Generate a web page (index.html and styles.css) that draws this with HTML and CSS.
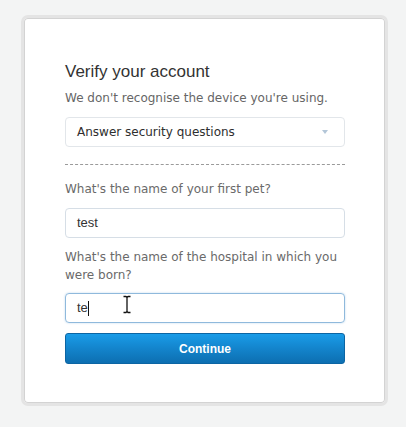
FILE: index.html
```html
<!DOCTYPE html>
<html>
<head>
<meta charset="utf-8">
<link rel="stylesheet" href="styles.css">
</head>
<body>
<div class="card">
  <h1 class="title">Verify your account</h1>
  <p class="subtitle">We don't recognise the device you're using.</p>
  <div class="select">
    <span class="select-text">Answer security questions</span>
    <span class="arrow"></span>
  </div>
  <hr class="divider">
  <label class="label">What's the name of your first pet?</label>
  <div class="field"><span class="field-text">test</span></div>
  <label class="label">What's the name of the hospital in which you were born?</label>
  <div class="field focused">
    <span class="field-text">te</span><span class="caret"></span>
    <svg class="ibeam" width="10" height="19" viewBox="0 0 10 19">
      <path d="M1.5 1.5 H4 L5 2.5 L6 1.5 H8.5 M5 2.5 V16.5 M1.5 17.5 H4 L5 16.5 L6 17.5 H8.5" fill="none" stroke="#fff" stroke-width="3" stroke-linecap="round" stroke-linejoin="round"/>
      <path d="M1.5 1.5 H4 L5 2.5 L6 1.5 H8.5 M5 2.5 V16.5 M1.5 17.5 H4 L5 16.5 L6 17.5 H8.5" fill="none" stroke="#111" stroke-width="1.3" stroke-linejoin="round"/>
    </svg>
  </div>
  <button class="button">Continue</button>
</div>
</body>
</html>
```
FILE: styles.css
```css
html, body {
  margin: 0;
  padding: 0;
}
body {
  background: #f3f4f4;
  width: 406px;
  height: 427px;
  overflow: hidden;
  padding-top: 15px;
  box-sizing: border-box;
}
.card {
  box-sizing: border-box;
  margin-left: 21px;
  width: 367px;
  height: 391px;
  background: #fff;
  border: 3px solid #e4e4e4;
  box-shadow: inset 0 0 0 1px #d3d3d3;
  border-radius: 7px;
  padding: 44px 40px 0 41px;
  display: flex;
  flex-direction: column;
}
.title {
  margin: 0;
  font-family: "Liberation Sans", Arial, sans-serif;
  font-weight: normal;
  font-size: 17px;
  line-height: 20px;
  color: #333;
}
.subtitle {
  margin: 7px 0 0;
  font-family: "DejaVu Sans", sans-serif;
  font-size: 12px;
  line-height: 18px;
  color: #666;
}
.select {
  margin-top: 10px;
  height: 30px;
  box-sizing: border-box;
  border: 1px solid #e2e6ea;
  border-radius: 4px;
  display: flex;
  align-items: center;
  justify-content: space-between;
  padding: 0 16px 0 11px;
}
.select-text {
  font-family: "DejaVu Sans", sans-serif;
  font-size: 12px;
  color: #2e2e2e;
}
.arrow {
  width: 0;
  height: 0;
  border-left: 3.5px solid transparent;
  border-right: 3.5px solid transparent;
  border-top: 4px solid #b3c6d8;
  margin-top: -1px;
}
.divider {
  margin: 17px 0 0;
  border: 0;
  border-top: 1px dashed #9a9a9a;
  height: 0;
}
.label {
  display: block;
  margin-top: 15px;
  font-family: "DejaVu Sans", sans-serif;
  font-size: 12px;
  line-height: 18px;
  color: #6a6a6a;
}
.field + .label {
  margin-top: 10px;
}
.field {
  position: relative;
  margin-top: 10px;
  height: 30px;
  box-sizing: border-box;
  border: 1px solid #d6dee6;
  border-radius: 4px;
  display: flex;
  align-items: center;
  padding: 0 11px;
  font-family: "Liberation Sans", Arial, sans-serif;
  font-size: 13px;
  color: #333;
}
.field.focused {
  margin-top: 9px;
  border-color: #8fb9dc;
  box-shadow: 0 0 2px rgba(100, 160, 215, 0.45);
}
.field-text {
  line-height: 16px;
}
.caret {
  display: inline-block;
  width: 1px;
  height: 15px;
  background: #111;
}
.ibeam {
  position: absolute;
  left: 56px;
  top: 1px;
}
.button {
  margin-top: 10px;
  height: 31px;
  box-sizing: border-box;
  border: 1px solid #0c65a3;
  border-radius: 3px;
  background: linear-gradient(to bottom, #1a9ce8 0%, #1384cc 50%, #0d6fb1 100%);
  color: #fff;
  font-family: "Liberation Sans", Arial, sans-serif;
  font-weight: bold;
  font-size: 12px;
  padding: 0;
  cursor: pointer;
}
```
